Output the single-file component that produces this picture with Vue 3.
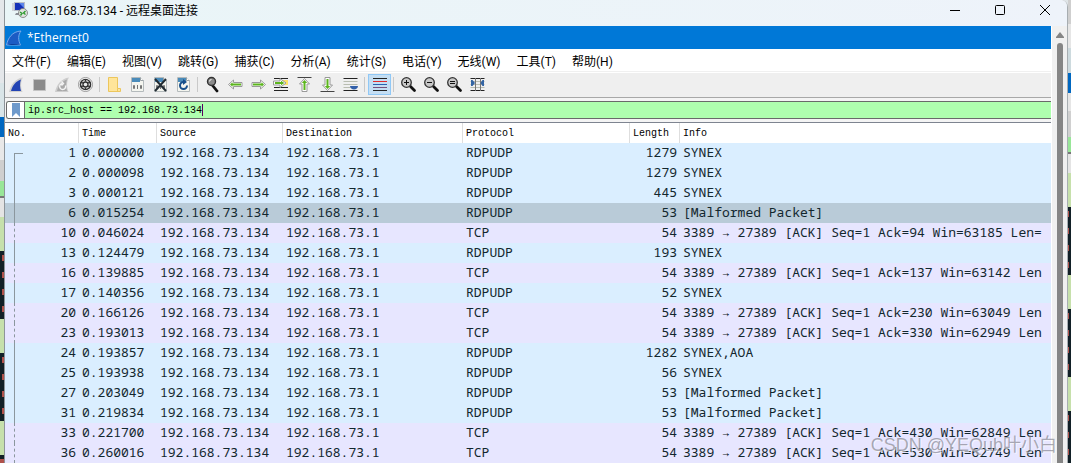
<script setup>
import { ref } from 'vue'

const menus = ['文件(F)', '编辑(E)', '视图(V)', '跳转(G)', '捕获(C)', '分析(A)', '统计(S)', '电话(Y)', '无线(W)', '工具(T)', '帮助(H)']
const filter = ref('ip.src_host == 192.168.73.134')

const toolGroups = [
  ['start', 'stop', 'restart', 'options'],
  ['open', 'save', 'close', 'reload'],
  ['find', 'back', 'forward', 'goto', 'first', 'last', 'autoscroll'],
  ['colorize'],
  ['zoomin', 'zoomout', 'zoomreset', 'resize'],
]

const src = '192.168.73.134'
const dst = '192.168.73.1'
const udp = (no, time, length, info) => ({ no, time, protocol: 'RDPUDP', length, info })
const tcp = (no, time, ack, win, tail = 'Len') => ({
  no, time, protocol: 'TCP', length: 54,
  info: `3389 → 27389 [ACK] Seq=1 Ack=${ack} Win=${win} ${tail}`,
})
const packets = [
  udp(1, '0.000000', 1279, 'SYNEX'),
  udp(2, '0.000098', 1279, 'SYNEX'),
  udp(3, '0.000121', 445, 'SYNEX'),
  udp(6, '0.015254', 53, '[Malformed Packet]'),
  tcp(10, '0.046024', 94, 63185, 'Len='),
  udp(13, '0.124479', 193, 'SYNEX'),
  tcp(16, '0.139885', 137, 63142),
  udp(17, '0.140356', 52, 'SYNEX'),
  tcp(20, '0.166126', 230, 63049),
  tcp(23, '0.193013', 330, 62949),
  udp(24, '0.193857', 1282, 'SYNEX,AOA'),
  udp(25, '0.193938', 56, 'SYNEX'),
  udp(27, '0.203049', 53, '[Malformed Packet]'),
  udp(31, '0.219834', 53, '[Malformed Packet]'),
  tcp(33, '0.221700', 430, 62849),
  tcp(36, '0.260016', 530, 62749),
]
const selected = ref(6)
</script>

<template>
  <div class="desktop">
    <div class="behind left"></div>

    <section class="window">
      <header class="titlebar">
        <svg class="app-icon" width="16" height="16" viewBox="0 0 16 16">
          <path d="M0 1h7v8H0z" fill="#cfd3da" />
          <path d="M2 0h11v9H2z" fill="#b9bec8" />
          <path d="M3 1h9v7H3z" fill="#1431b8" />
          <path d="M7 1h5v5z" fill="#5c86ea" />
          <path d="M4 11h6v2H3z" fill="#8b8f96" />
          <circle cx="11" cy="11" r="4.500" fill="#dfe3df" stroke="#777" stroke-width=".8" />
          <path d="M8 10l2 1.500L8.500 13.500M13.500 9L11.500 11l2 1.500" fill="none" stroke="#299a2b" stroke-width="1.300" />
        </svg>
        <h1>192.168.73.134 - 远程桌面连接</h1>
        <div class="controls">
          <button type="button" aria-label="最小化"><svg width="12" height="12"><path d="M1 6.500h10" /></svg></button>
          <button type="button" aria-label="最大化"><svg width="12" height="12"><rect x="1.500" y="1.500" width="9" height="9" rx="1" /></svg></button>
          <button type="button" aria-label="关闭"><svg width="12" height="12"><path d="M1 1l10 10M11 1L1 11" /></svg></button>
        </div>
      </header>

      <div class="session">
        <main class="remote">
          <div class="caption">
            <svg width="16" height="16" viewBox="0 0 16 16">
              <path d="M.5 15C2 8 6 1.500 15 1c-3 4-3 9-.5 14z" fill="#1c5cc4" stroke="#79a9ea" stroke-width="1" />
              <path d="M1 15c3-1.500 9-1.500 13.500 0z" fill="#0d3f98" />
            </svg>
            <span>*Ethernet0</span>
          </div>

          <nav class="menubar">
            <button v-for="m in menus" :key="m" type="button">{{ m }}</button>
          </nav>

          <div class="toolbar">
            <div v-for="(group, g) in toolGroups" :key="g" class="group">
              <button v-for="t in group" :key="t" type="button" :aria-label="t" :class="{ pressed: t === 'colorize' }">
                <svg width="19" height="19" viewBox="0 0 19 19">
                  <template v-if="t === 'start'">
                    <path d="M2 17C3.500 10 8 3.500 16 2.500c-2.500 4-2.500 10-.5 14.500z" fill="#d0d0d0" />
                    <path d="M4 16C5.500 10.500 9 6 14 4.500c-1.500 4-1 8 0 11.500z" fill="#2344b4" />
                  </template>
                  <path v-else-if="t === 'stop'" d="M3.500 4.500h12v11h-12z" fill="#8b8b8b" stroke="#c4c4c4" />
                  <template v-else-if="t === 'restart'">
                    <path d="M2 17C3.500 10 8 3.500 16 2.500c-2.500 4-2.500 10-.5 14.500z" fill="#cdcdcd" />
                    <path d="M4 16C5.500 10.500 9 6 14 4.500c-1.500 4-1 8 0 11.500z" fill="#aaa" />
                    <path d="M12.500 10.500a3 3 0 1 1-3-2M8.500 6.500l2 2-2 2" fill="none" stroke="#f4f4f4" stroke-width="1.400" />
                  </template>
                  <template v-else-if="t === 'options'">
                    <circle cx="9.500" cy="9.500" r="7" fill="#fff" stroke="#999" />
                    <circle cx="9.500" cy="9.500" r="5.800" fill="#333" />
                    <circle cx="9.500" cy="9.500" r="3.800" fill="none" stroke="#eee" stroke-width="1.200" />
                    <circle cx="9.500" cy="9.500" r="1.800" fill="#eee" />
                    <path d="M9.500 4v2.500M9.500 12.500V15M4.700 7l2 1M12.300 11l2 1M14.300 7l-2 1M6.700 11l-2 1" stroke="#333" stroke-width="1.400" />
                  </template>
                  <template v-else-if="t === 'open'">
                    <path d="M3.500 2.500h9v11h3v3h-12z" fill="#ffe59a" stroke="#ecc65c" />
                    <path d="M12.500 13.500v3" stroke="#ecc65c" />
                  </template>
                  <template v-else-if="t === 'save' || t === 'close' || t === 'reload'">
                    <path d="M3.500 2.500h9l3 3v11h-12z" fill="#f4f5ef" stroke="#b4babc" />
                    <path d="M4 3h8v4H4z" fill="#4b8cba" />
                    <path d="M12.500 2.500v3h3" fill="#fff" stroke="#9aa2a6" />
                    <g v-if="t !== 'reload'" fill="none" stroke="#777">
                      <path d="M5.500 10.500h1v3h-1zM9.500 10v4M12.500 10.500h1v3h-1z" />
                    </g>
                    <path v-if="t === 'close'" d="M4 4l11 12M15 4L4 16" stroke="#222c33" stroke-width="2" />
                    <template v-if="t === 'reload'">
                      <path d="M13 10.500a3.500 3.500 0 1 1-3.500-3.500" fill="none" stroke="#174f8b" stroke-width="2" />
                      <path d="M9 4l4 3-4 3z" fill="#174f8b" />
                    </template>
                  </template>
                  <template v-else-if="t === 'find'">
                    <path d="M10 11l4 5" stroke="#111" stroke-width="2.800" stroke-linecap="round" />
                    <circle cx="8.500" cy="6.500" r="4" fill="#8b8b8b" stroke="#333" stroke-width="1.400" />
                    <path d="M6.500 6.500a2 2 0 0 1 2-2" fill="none" stroke="#eee" />
                  </template>
                  <template v-else-if="t === 'back' || t === 'forward'">
                    <g :class="{ flip: t === 'forward' }">
                      <path d="M2.500 9.500l5-4.500v2.500h8.500v4H7.500V14z" fill="#fff" stroke="#999" stroke-linejoin="round" />
                      <path d="M4 9.500l2.500-2.200V8.500H15v2H6.500v1.200z" fill="#5cb51d" />
                    </g>
                  </template>
                  <template v-else-if="t === 'goto'">
                    <path d="M2 3.500h14M2 12.500h14M2 15.500h14" stroke="#222" />
                    <path d="M11 5h5v5h-5z" fill="#ffe16a" />
                    <path d="M1.500 6h6.500V3.500l6 4.500-6 4.500V10H1.500z" fill="#fff" stroke="#999" stroke-linejoin="round" />
                    <path d="M3 7h6V5.700L12.300 8 9 10.300V9H3z" fill="#5cb51d" />
                  </template>
                  <template v-else-if="t === 'first' || t === 'last'">
                    <g :class="{ turn: t === 'last' }">
                      <path d="M2.500 2.500h14" stroke="#444" />
                      <path d="M9.500 3.500l5 5.500H12v7.500H7V9H4.500z" fill="#fff" stroke="#999" stroke-linejoin="round" />
                      <path d="M9.500 5l2.700 3H10.500v7h-2V8H6.800z" fill="#5cb51d" />
                    </g>
                  </template>
                  <template v-else-if="t === 'autoscroll'">
                    <path d="M2.500 3.500h14M2.500 15.500h14" stroke="#222" />
                    <path d="M2.500 6.500h14M2.500 9.500h14M2.500 12.500h7" stroke="#b9bdb1" />
                    <path d="M9 11h8c0 2-2 3.500-4 3.500S9 13 9 11z" fill="#315fa8" />
                  </template>
                  <template v-else-if="t === 'colorize'">
                    <path d="M3 3.500h14M3 15.500h14" stroke="#222" />
                    <path d="M3 6.500h14" stroke="#e22c2c" />
                    <path d="M3 9.500h14" stroke="#2a62b0" />
                    <path d="M3 12.500h14" stroke="#76507b" />
                  </template>
                  <template v-else-if="t.startsWith('zoom')">
                    <path d="M11.500 11.500l4 4" stroke="#111" stroke-width="2.800" stroke-linecap="round" />
                    <circle cx="7.500" cy="7.500" r="4.800" fill="#c9c9c9" stroke="#333" stroke-width="1.300" />
                    <path v-if="t === 'zoomin'" d="M5 7.500h5M7.500 5v5" stroke="#111" />
                    <path v-else-if="t === 'zoomout'" d="M5 7.500h5" stroke="#111" />
                    <path v-else d="M5 6.500h5M5 8.500h5" stroke="#111" />
                  </template>
                  <template v-else-if="t === 'resize'">
                    <path d="M2.500 3.500h14M2.500 15.500h14" stroke="#222" />
                    <path d="M2.500 6.500h14M2.500 9.500h14M2.500 12.500h14" stroke="#b9bdb1" />
                    <path d="M7.500 3v13M12.500 3v13" stroke="#777" />
                    <path d="M3 5h1.500L7 8l-2.500 3H3zM16 5h-1.500L12.500 8l2 3H16z" fill="#3465a4" />
                  </template>
                </svg>
              </button>
            </div>
          </div>

          <div class="filterbar">
            <div class="filterbox">
              <button type="button" class="bookmark" aria-label="书签">
                <svg width="8" height="14"><path d="M0 0h8v14l-4-4-4 4z" fill="#6f9acb" /></svg>
              </button>
              <label class="field">
                <input v-model="filter" type="text" size="29" spellcheck="false" aria-label="显示过滤器" />
                <span class="caret"></span>
              </label>
            </div>
          </div>

          <table class="packets">
            <colgroup>
              <col class="c-no" /><col class="c-time" /><col class="c-src" /><col class="c-dst" />
              <col class="c-proto" /><col class="c-len" /><col />
            </colgroup>
            <thead>
              <tr>
                <th>No.</th><th>Time</th><th>Source</th><th>Destination</th>
                <th>Protocol</th><th>Length</th><th>Info</th>
              </tr>
            </thead>
            <tbody>
              <tr
                v-for="(p, i) in packets"
                :key="p.no"
                :class="[p.protocol === 'TCP' ? 'tcp' : 'udp', { selected: p.no === selected, opening: i === 0 }]"
                @click="selected = p.no"
              >
                <td class="num thread">{{ p.no }}</td>
                <td>{{ p.time }}</td>
                <td>{{ src }}</td>
                <td>{{ dst }}</td>
                <td>{{ p.protocol }}</td>
                <td class="num">{{ p.length }}</td>
                <td>{{ p.info }}</td>
              </tr>
            </tbody>
          </table>
        </main>

        <div class="scrollbar">
          <svg width="8" height="6"><path d="M4 0l4 5v1H0V5z" fill="#858585" /></svg>
          <div class="thumb"></div>
        </div>
      </div>
    </section>

    <div class="behind right"></div>
    <div class="watermark">CSDN @YEQub叶小白</div>
  </div>
</template>

<style>
body {
  margin: 0;
}
</style>

<style scoped>
.desktop {
  position: relative;
  display: flex;
  height: 100vh;
  overflow: hidden;
  background: #dfe5e8;
  font-family: Roboto, "Noto Sans CJK SC", sans-serif;
  font-size: 12px;
  color: #000;
}
button {
  padding: 0;
  border: 0;
  background: none;
  font: inherit;
  color: inherit;
}
svg {
  display: block;
}

.behind {
  --lines: repeating-linear-gradient(
    #c6e0ab 0 34px,
    #122027 34px 38px, #b0524c 38px 44px, #122027 44px 55px, #b0524c 55px 61px,
    #122027 61px 72px, #b0524c 72px 78px, #122027 78px 89px, #b0524c 89px 95px,
    #122027 95px 102px
  );
  flex: none;
  width: 4px;
}
.left {
  background:
    linear-gradient(#122027, #122027) 0 251px / 2px 68px no-repeat,
    linear-gradient(#122027, #122027) 0 353px / 2px 68px no-repeat,
    var(--lines) 0 217px / 4px 100% no-repeat,
    linear-gradient(#e4e7ea 83px, #d9e5e8 83px 117px, #0067c0 117px 137px, #e8e8e8 137px 160px, #cfcfcf 160px 181px, #98e698 181px 196px, #777 196px 198px, #e4e4e4 198px);
}
.right {
  width: 3px;
  background:
    linear-gradient(#122027, #122027) 1px 207px / 2px 68px no-repeat,
    linear-gradient(#122027, #122027) 1px 309px / 2px 68px no-repeat,
    linear-gradient(#122027, #122027) 1px 411px / 2px 68px no-repeat,
    var(--lines) 0 173px / 4px 100% no-repeat,
    linear-gradient(#cfcfcf 24px, #e6e6e6 24px 48px, #cddade 48px 73px, #0067c0 73px 93px, #e6e6e6 93px 111px, #d0d0d0 111px 137px, #98e698 137px 152px, #777 152px 154px, #e4e4e4 154px);
}

.window {
  display: flex;
  flex: 1;
  flex-direction: column;
  min-width: 0;
  box-sizing: border-box;
  border-left: 1px solid #8d9499;
  border-right: 1px solid #a7adb1;
  border-radius: 0 7px 0 0;
  background: #f0f0f0;
}
.titlebar {
  display: flex;
  flex: none;
  align-items: center;
  height: 26px;
  padding-left: 7px;
  border-radius: 0 6px 0 0;
  background: linear-gradient(90deg, #e9f5f7, #eef3fa);
}
.app-icon {
  margin: 0 5px 6px 0;
}
h1 {
  flex: 1;
  margin: 0 0 4px;
  font-size: 12px;
  font-weight: 400;
  line-height: 16px;
  white-space: nowrap;
}
.controls {
  display: flex;
  padding-bottom: 6px;
}
.controls button {
  display: grid;
  place-items: center;
  width: 45px;
  height: 20px;
}
.controls svg {
  fill: none;
  stroke: #000;
}

.session {
  display: flex;
  flex: 1;
  min-height: 0;
}
.remote {
  flex: 1;
  min-width: 0;
  overflow: hidden;
  background: #fff;
}
.scrollbar {
  display: flex;
  flex: none;
  flex-direction: column;
  align-items: center;
  gap: 5px;
  width: 15px;
  padding-top: 6px;
  border-left: 1px solid #fff;
  background: #f0f0f0;
}
.thumb {
  flex: 1;
  width: 6px;
  border-radius: 3px 3px 0 0;
  background: #858585;
}

.caption {
  display: flex;
  align-items: center;
  gap: 5px;
  height: 23px;
  padding-left: 1px;
  background: #0078d7;
  color: #fff;
  font-family: "Open Sans", sans-serif;
}
.menubar {
  display: flex;
  gap: 16px;
  height: 22px;
  padding-left: 7px;
  border-bottom: 1px solid #f0f0f0;
  white-space: nowrap;
}

.toolbar {
  display: flex;
  align-items: flex-start;
  box-sizing: border-box;
  height: 26px;
  padding-top: 1px;
  border-top: 1px solid #fff;
  border-bottom: 1px solid #a8a8a8;
  background: #efefef;
}
.group {
  display: flex;
  align-items: center;
}
.group + .group::before {
  content: "";
  width: 1px;
  height: 15px;
  margin: 0 3px 0 2px;
  background: #c9c9c9;
}
.group button {
  display: grid;
  place-items: center;
  box-sizing: border-box;
  width: 23px;
  height: 21px;
}
.group .pressed {
  border: 1px solid #90c8f6;
  background: #c4def3;
}
.flip,
.turn {
  transform: rotate(180deg);
  transform-origin: 9.5px 9.5px;
}

.filterbar {
  padding: 3px 0 3px 1px;
  background: #f4f4f4;
}
.filterbox {
  display: flex;
  box-sizing: border-box;
  height: 18px;
  overflow: hidden;
  border: 1px solid #6a6a6a;
  border-right: 0;
  border-radius: 3px 0 0 3px;
  background: #afffaf;
}
.bookmark {
  display: grid;
  flex: none;
  place-items: center;
  width: 18px;
  border-right: 1px solid #6a6a6a;
  background: #fff;
}
.field {
  display: flex;
  flex: 1;
  align-items: center;
  padding-left: 3px;
}
.field input {
  field-sizing: content;
  padding: 1px 0 0;
  border: 0;
  outline: 0;
  background: none;
  color: #000;
  font: 10px "Liberation Mono", monospace;
}
.caret {
  width: 1px;
  height: 12px;
  background: #5b0060;
}

.packets {
  width: 100%;
  table-layout: fixed;
  border-collapse: separate;
  border-spacing: 0;
  border-top: 1px solid #7e8490;
  font-family: "Noto Sans Mono", "DejaVu Sans Mono", monospace;
  font-size: 13px;
  color: #12272e;
}
.c-no { width: 74px; }
.c-time { width: 78px; }
.c-src { width: 126px; }
.c-dst { width: 180px; }
.c-proto { width: 167px; }
.c-len { width: 50px; }
th {
  box-sizing: border-box;
  height: 20px;
  padding: 2px 4px 0 3px;
  border-right: 1px solid #dedede;
  color: #000;
  font: 10px/18px "Liberation Mono", monospace;
  text-align: left;
}
th:last-child {
  border-right: 0;
}
td {
  padding: 0 3px 2px;
  overflow: hidden;
  line-height: 18px;
  white-space: pre;
}
.num {
  text-align: right;
}
.udp { background: #daeeff; }
.tcp { background: #e7e6ff; }
.selected { background: #b9cbd8; }
.thread {
  position: relative;
}
.thread::before {
  content: "";
  position: absolute;
  top: 0;
  bottom: 0;
  left: 9px;
  border-left: 1px solid #8b979e;
}
.tcp .thread::before {
  border-left-style: dashed;
}
.opening .thread::before {
  top: 10px;
  width: 8px;
  border-top: 1px solid #8b979e;
}

.watermark {
  position: absolute;
  right: 14px;
  bottom: 6px;
  color: rgba(120, 120, 130, 0.6);
  font-family: "Liberation Sans", "Noto Sans CJK SC", sans-serif;
  font-size: 18px;
  line-height: 24px;
  text-shadow: 1px 1px 0 rgba(255, 255, 255, 0.6);
  white-space: nowrap;
  pointer-events: none;
}
</style>
